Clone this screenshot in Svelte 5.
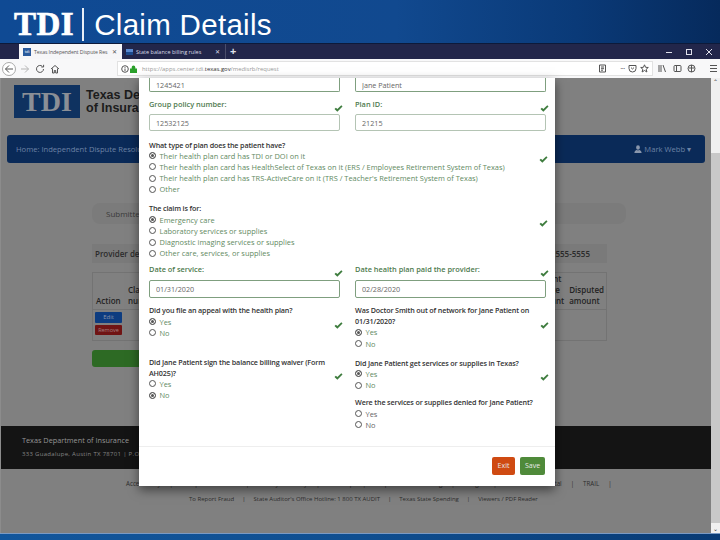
<script>
	const planTypes = [
		{ label: 'Their health plan card has TDI or DOI on it', checked: true },
		{ label: 'Their health plan card has HealthSelect of Texas on it (ERS / Employees Retirement System of Texas)' },
		{ label: "Their health plan card has TRS-ActiveCare on it (TRS / Teacher's Retirement System of Texas)" },
		{ label: 'Other' }
	];
	const claimTypes = [
		{ label: 'Emergency care', checked: true },
		{ label: 'Laboratory services or supplies' },
		{ label: 'Diagnostic imaging services or supplies' },
		{ label: 'Other care, services, or supplies' }
	];
	const footerOne = ['Accessibility', 'Complaints / Fraud', 'Privacy / Security', 'Site Map', 'Surprise Balance Billing', 'Budget', 'Texas Online Portal', 'TRAIL'];
	const footerTwo = ['To Report Fraud', "State Auditor's Office Hotline: 1 800 TX AUDIT", 'Texas State Spending', 'Viewers / PDF Reader'];
</script>

{#snippet check()}
	<svg class="check" viewBox="0 0 10 8" width="9" height="7"><path d="M0.4 4.6 L2 3 L3.7 4.6 L8.2 0.4 L9.6 1.6 L3.7 7.6 Z" /></svg>
{/snippet}

{#snippet radio(label, checked = false, green = true)}
	<div class="radio" class:green>
		<span class="dot" class:checked></span>
		<span>{label}</span>
	</div>
{/snippet}

<div class="slide">
	<header class="title">
		<span class="logo">TDI</span>
		<span class="sep"></span>
		<h1>Claim Details</h1>
	</header>

	<div class="tabbar">
		<div class="tab active">
			<span class="favicon">tdi</span>
			<span class="tabtext">Texas Independent Dispute Res</span>
			<span class="tabx">✕</span>
		</div>
		<div class="tab">
			<span class="favicon flat"></span>
			<span class="tabtext">State balance billing rules</span>
			<span class="tabx">✕</span>
		</div>
		<span class="plus">+</span>
		<div class="winbtns">
			<svg width="8" height="8" viewBox="0 0 8 8"><path d="M1 4.5H7" /></svg>
			<svg width="8" height="8" viewBox="0 0 8 8"><rect x="1.5" y="1.5" width="5" height="5" /></svg>
			<svg width="8" height="8" viewBox="0 0 8 8"><path d="M1 1L7 7M7 1L1 7" /></svg>
		</div>
	</div>

	<div class="toolbar">
		<span class="back">
			<svg width="10" height="10" viewBox="0 0 10 10"><path d="M9 5H1.5M5 1.5L1.5 5L5 8.5" /></svg>
		</span>
		<svg class="faint" width="10" height="10" viewBox="0 0 10 10"><path d="M1 5H8.5M5 1.5L8.5 5L5 8.5" /></svg>
		<svg width="10" height="10" viewBox="0 0 10 10"><path d="M8.5 5A3.5 3.5 0 1 1 7.3 2.3M8.6 0.8V3H6.4" /></svg>
		<svg width="10" height="10" viewBox="0 0 10 10"><path d="M1 5L5 1.5L9 5M2.5 4.5V9H4.3V6.5H5.7V9H7.5V4.5" /></svg>
		<div class="urlbar">
			<svg width="8" height="8" viewBox="0 0 8 8"><circle cx="4" cy="4" r="3.3" /><path d="M4 3.5V6M4 2V2.8" /></svg>
			<svg class="lock" width="7" height="8" viewBox="0 0 7 8"><path d="M1.7 3.5V2.2A1.8 1.8 0 0 1 5.3 2.2V3.5H7V8H0V3.5Z" /></svg>
			<span class="url">https://apps.center.tdi.<b>texas.gov</b>/medisrb/request</span>
			<span class="urlicons">
				<svg width="9" height="9" viewBox="0 0 9 9"><path d="M1.5 1H7.5V8H1.5ZM3 3H6M3 4.7H6M3 6.2H5" /></svg>
				<span class="more">•••</span>
				<svg width="9" height="9" viewBox="0 0 9 9"><path d="M1 1.5H8V4.5A3.5 3.5 0 0 1 1 4.5ZM3 3.6L4.5 5L6 3.6" /></svg>
				<svg width="9" height="9" viewBox="0 0 9 9"><path d="M4.5 0.8L5.6 3.3L8.3 3.5L6.2 5.2L6.9 8L4.5 6.5L2.1 8L2.8 5.2L0.7 3.5L3.4 3.3Z" /></svg>
			</span>
		</div>
		<svg width="9" height="9" viewBox="0 0 9 9"><path d="M1 1V8M3 1V8M5 1L7.5 8" /></svg>
		<svg class="sidebar" width="9" height="9" viewBox="0 0 9 9"><rect x="1" y="1.5" width="7" height="6" rx="1" /><path d="M3.5 1.5V7.5" /></svg>
		<svg width="9" height="9" viewBox="0 0 9 9"><circle cx="4.5" cy="4.5" r="3.5" /><path d="M1.5 4H7.5M4.5 1V8" /></svg>
		<svg class="menu" width="9" height="9" viewBox="0 0 9 9"><path d="M1 1.5H8M1 4.5H8M1 7.5H8" /></svg>
	</div>

	<div class="viewport">
		<div class="page">
			<div class="brand">
				<span class="brandlogo">TDI</span>
				<span class="brandname">Texas Department<br />of Insurance</span>
			</div>
			<nav class="topnav">
				<span>Home: Independent Dispute Resolution</span>
				<span class="user">
					<svg width="8" height="8" viewBox="0 0 8 8"><path d="M4 0.3A1.9 2.2 0 0 1 4 4.7A1.9 2.2 0 0 1 4 0.3ZM0.4 8C0.4 6 1.6 5.2 2.8 4.9L4 5.6L5.2 4.9C6.4 5.2 7.6 6 7.6 8Z" /></svg>
					Mark Webb ▾
				</span>
			</nav>
			<div class="steps"><span>Submitted</span></div>
			<div class="provider"><span>Provider details</span><span>555-5555</span></div>
			<div class="claims">
				<div class="chead">
					<span class="action">Action</span>
					<span class="cnum">Claim<br />number</span>
					<span class="amt"><span>Patient<br />charge<br />amount</span><span>Disputed<br />amount</span></span>
				</div>
				<div class="cbody">
					<span class="edit">Edit</span>
					<span class="remove">Remove</span>
				</div>
			</div>
			<div class="addbar"></div>
			<footer class="dark">
				<div class="dtitle">Texas Department of Insurance</div>
				<div class="daddr">333 Guadalupe, Austin TX 78701 | P.O. Box 149104</div>
			</footer>
			<div class="links">
				{#each footerOne as l}<span>{l}</span><i>|</i>{/each}
			</div>
			<div class="links second">
				{#each footerTwo as l, i}<span>{l}</span>{#if i < footerTwo.length - 1}<i>|</i>{/if}{/each}
			</div>
		</div>
		<div class="scrollbar">
			<span>⌃</span>
			<span class="thumb"></span>
			<span>⌄</span>
		</div>

		<div class="modal">
			<div class="modalbody">
				<div class="grid">
					<div class="field">
						<input class="input ok" value="1245421" readonly />
					</div>
					<div class="field">
						<input class="input ok" value="Jane Patient" readonly />
					</div>
					<div class="field">
						<div class="lab"><span>Group policy number:</span>{@render check()}</div>
						<input class="input" value="12532125" readonly />
					</div>
					<div class="field">
						<div class="lab"><span>Plan ID:</span>{@render check()}</div>
						<input class="input" value="21215" readonly />
					</div>
				</div>

				<div class="group plan">
					<div class="q">What type of plan does the patient have?</div>
					{#each planTypes as p}{@render radio(p.label, p.checked)}{/each}
					{@render check()}
				</div>
				<div class="group claim">
					<div class="q">The claim is for:</div>
					{#each claimTypes as p}{@render radio(p.label, p.checked)}{/each}
					{@render check()}
				</div>

				<div class="grid dates">
					<div class="field">
						<div class="lab"><span>Date of service:</span>{@render check()}</div>
						<input class="input ok" value="01/31/2020" readonly />
					</div>
					<div class="field">
						<div class="lab"><span>Date health plan paid the provider:</span>{@render check()}</div>
						<input class="input ok" value="02/28/2020" readonly />
					</div>
				</div>

				<div class="grid">
					<div>
						<div class="group">
							<div class="q">Did you file an appeal with the health plan?</div>
							{@render radio('Yes', true)}
							{@render radio('No')}
							{@render check()}
						</div>
						<div class="group waiver">
							<div class="q">Did Jane Patient sign the balance billing waiver (Form AH025)?</div>
							{@render radio('Yes')}
							{@render radio('No', true)}
							{@render check()}
						</div>
					</div>
					<div>
						<div class="group">
							<div class="q">Was Doctor Smith out of network for Jane Patient on 01/31/2020?</div>
							{@render radio('Yes', true)}
							{@render radio('No')}
							{@render check()}
						</div>
						<div class="group texas">
							<div class="q">Did Jane Patient get services or supplies in Texas?</div>
							{@render radio('Yes', true)}
							{@render radio('No')}
							{@render check()}
						</div>
						<div class="group denied">
							<div class="q">Were the services or supplies denied for Jane Patient?</div>
							{@render radio('Yes', false, false)}
							{@render radio('No', false, false)}
						</div>
					</div>
				</div>
			</div>
			<div class="modalfoot">
				<span class="btn exit">Exit</span>
				<span class="btn save">Save</span>
			</div>
		</div>
	</div>

	<div class="taskbar"></div>
</div>

<style>
	:global(body) {
		margin: 0;
	}

	.slide {
		width: 720px;
		height: 540px;
		overflow: hidden;
		display: flex;
		flex-direction: column;
		font-family: "Open Sans", sans-serif;
		background: #808080;
	}

	.title {
		height: 43px;
		flex: none;
		display: flex;
		align-items: center;
		padding: 6px 0 0 14px;
		box-sizing: border-box;
		background: linear-gradient(90deg, #0f4a94 0%, #11498f 55%, #0a3a78 80%, #062a5c 100%);
		color: #fff;
	}

	.logo {
		font-family: "Liberation Serif", serif;
		font-weight: bold;
		font-size: 33px;
		letter-spacing: 0.5px;
		line-height: 1;
		-webkit-text-stroke: 0.7px #fff;
	}

	.sep {
		width: 2px;
		height: 33px;
		margin: 0 10px 0 8px;
		background: #e8eef6;
	}

	h1 {
		margin: 0;
		font-family: "Liberation Sans", sans-serif;
		font-weight: normal;
		font-size: 29.5px;
		line-height: 1;
		letter-spacing: 0.3px;
	}

	.tabbar {
		height: 16px;
		flex: none;
		display: flex;
		align-items: stretch;
		padding-left: 19px;
		background: #22264a;
		color: #d8dae6;
		font-size: 5.5px;
		border-top: 1px solid #0d1a3a;
		box-sizing: border-box;
	}

	.tab {
		width: 104px;
		display: flex;
		align-items: center;
		gap: 3px;
		padding-left: 4px;
		box-sizing: border-box;
		white-space: nowrap;
		overflow: hidden;
		border-right: 1px solid #4a4d6a;
	}

	.tab.active {
		background: #f6f6f8;
		color: #555;
		width: 103px;
		border-right: 0;
		font-size: 5.2px;
		letter-spacing: -0.1px;
	}

	.favicon {
		width: 8px;
		height: 8px;
		background: #2a5a9c;
		color: #fff;
		font-size: 4px;
		line-height: 8px;
		text-align: center;
		flex: none;
	}

	.favicon.flat {
		width: 7px;
		height: 6px;
		background: linear-gradient(#5a8ad0 50%, #1c4a8c 50%);
	}

	.tabtext {
		flex: 1;
		min-width: 0;
	}

	.tabx {
		flex: none;
		width: 12px;
		margin-right: 2px;
		text-align: center;
		font-size: 6px;
	}

	.plus {
		margin-left: 4px;
		font-size: 11px;
		line-height: 14px;
		font-weight: bold;
		color: #dfe0ea;
	}

	.winbtns {
		margin-left: auto;
		display: flex;
		align-items: center;
		gap: 12px;
		padding-right: 7px;
	}

	.winbtns svg {
		fill: none;
		stroke: #dfe0ea;
		stroke-width: 1;
	}

	.toolbar {
		height: 19px;
		flex: none;
		display: flex;
		align-items: center;
		gap: 5px;
		padding-left: 2px;
		box-sizing: border-box;
		background: #f8f8f9;
	}

	.toolbar svg {
		fill: none;
		stroke: #555;
		stroke-width: 1;
		flex: none;
	}

	.toolbar svg.faint {
		stroke: #b5b5b5;
	}

	.toolbar svg.lock {
		fill: #2ba02b;
		stroke: none;
	}

	.toolbar svg.sidebar {
		margin-left: 1px;
	}

	.toolbar svg.menu {
		margin-left: 8px;
	}

	.back {
		width: 14px;
		height: 14px;
		box-sizing: border-box;
		border: 1px solid #aaa;
		border-radius: 50%;
		display: flex;
		align-items: center;
		justify-content: center;
		background: #fff;
		flex: none;
		margin-right: -1px;
	}

	.urlbar {
		width: 536px;
		flex: none;
		height: 15px;
		margin-left: 52px;
		display: flex;
		align-items: center;
		gap: 1px;
		padding: 0 3px;
		box-sizing: border-box;
		background: #fff;
		border: 1px solid #e2e2e2;
		font-size: 5.9px;
		color: #9a9a9a;
		white-space: nowrap;
	}

	.url {
		margin-left: 4px;
	}

	.url b {
		color: #333;
		font-weight: 400;
	}

	.urlicons {
		margin-left: auto;
		display: flex;
		align-items: center;
		gap: 3px;
	}

	.more {
		font-size: 4px;
		margin-left: 10px;
		color: #555;
	}

	.viewport {
		flex: 1;
		min-height: 0;
		display: flex;
		position: relative;
		background: #808080;
	}

	.page {
		flex: 1;
		min-width: 0;
		display: flex;
		flex-direction: column;
		color: #333;
		border-left: 1px solid #8c8c8c;
	}

	.brand {
		display: flex;
		align-items: center;
		gap: 6px;
		padding: 7px 0 0 13px;
		height: 40px;
		box-sizing: border-box;
		flex: none;
	}

	.brandlogo {
		width: 66px;
		height: 33px;
		background: #0f3260;
		color: #8b8f96;
		font-family: "Liberation Serif", serif;
		font-weight: bold;
		font-size: 28px;
		line-height: 33px;
		text-align: center;
		flex: none;
	}

	.brandname {
		font-family: "Liberation Sans", sans-serif;
		font-weight: bold;
		font-size: 12.5px;
		line-height: 13px;
		color: #1c1c1c;
	}

	.topnav {
		height: 28px;
		flex: none;
		margin: 17px 6px 0 6px;
		padding: 0 14px 0 9px;
		display: flex;
		align-items: center;
		justify-content: space-between;
		background: #0a2a58;
		border-radius: 3px;
		color: #6d83a5;
		font-size: 7.6px;
	}

	.user {
		display: flex;
		align-items: center;
		gap: 2px;
	}

	.user svg {
		fill: #8a97ad;
	}

	.steps {
		height: 21px;
		flex: none;
		margin: 40px 0 0 91px;
		width: 534px;
		padding-left: 14px;
		display: flex;
		align-items: center;
		box-sizing: border-box;
		background: #7b7b7b;
		border-radius: 8px;
		font-size: 8px;
		color: #3a3a3a;
	}

	.provider {
		height: 19px;
		flex: none;
		margin: 20px 0 0 91px;
		width: 515px;
		padding: 0 17px 0 3px;
		box-sizing: border-box;
		display: flex;
		align-items: center;
		justify-content: space-between;
		background: #7a7a7a;
		font-size: 8px;
		font-weight: 600;
		color: #2b2b2b;
	}

	.claims {
		margin: 9px 0 0 91px;
		width: 515px;
		height: 69px;
		box-sizing: border-box;
		border: 1px solid #737373;
		font-size: 8px;
		color: #232323;
		flex: none;
	}

	.chead {
		height: 37px;
		padding: 0 2px 3px 3px;
		box-sizing: border-box;
		display: flex;
		align-items: flex-end;
		border-bottom: 1px solid #737373;
		line-height: 11px;
	}

	.action {
		width: 29px;
		font-weight: 600;
	}

	.cnum {
		margin-left: 3px;
		font-weight: 600;
	}

	.amt {
		margin-left: auto;
		display: flex;
		align-items: flex-end;
		gap: 5px;
		font-weight: 600;
	}

	.cbody {
		display: flex;
		flex-direction: column;
		gap: 2px;
		padding: 2px 0 0 2px;
	}

	.edit, .remove {
		width: 27px;
		height: 11px;
		border-radius: 1px;
		font-size: 6px;
		line-height: 11px;
		text-align: center;
		color: #8894aa;
		background: #0d3c80;
	}

	.remove {
		height: 10px;
		line-height: 10px;
		background: #701414;
		color: #a58080;
		font-size: 5.5px;
	}

	.addbar {
		height: 17px;
		flex: none;
		width: 180px;
		margin: 9px 0 0 91px;
		background: #2d6a24;
		border-radius: 3px;
	}

	.dark {
		height: 43px;
		flex: none;
		box-sizing: border-box;
		margin-top: 59px;
		padding: 6px 0 0 21px;
		background: #141414;
		color: #858585;
		width: 710px;
	}

	.dtitle {
		font-size: 7.3px;
		line-height: 16px;
		color: #959595;
	}

	.daddr {
		font-size: 6px;
		line-height: 13px;
		letter-spacing: 0.3px;
	}

	.links {
		margin-top: 10px;
		padding-left: 125px;
		display: flex;
		gap: 9px;
		font-size: 6.2px;
		line-height: 9px;
		color: #2d2d2d;
		white-space: nowrap;
	}

	.links.second {
		margin-top: 7px;
		padding-left: 188px;
		gap: 8px;
		font-size: 6px;
	}

	.links i {
		font-style: normal;
	}

	.scrollbar {
		width: 9px;
		flex: none;
		box-sizing: border-box;
		display: flex;
		flex-direction: column;
		align-items: center;
		justify-content: space-between;
		background: #f0f0f0;
		font-size: 6px;
		color: #333;
		position: relative;
	}

	.scrollbar .thumb {
		position: absolute;
		left: 0;
		right: 0;
		top: 75px;
		height: 370px;
		background: #c8c8c8;
	}

	.modal {
		position: absolute;
		left: 139px;
		top: 0;
		width: 416px;
		height: 408px;
		background: #fff;
		box-shadow: 0 4px 10px rgba(0, 0, 0, 0.5);
		display: flex;
		flex-direction: column;
		color: #333;
		font-size: 7.45px;
	}

	.modalbody {
		flex: 1;
		min-height: 0;
		box-sizing: border-box;
		padding: 0 10px;
		border-bottom: 1px solid #eee;
	}

	.grid {
		display: grid;
		grid-template-columns: 191px 191px;
		column-gap: 15px;
	}

	.field {
		display: flex;
		flex-direction: column;
	}

	.lab {
		height: 22px;
		box-sizing: border-box;
		padding-top: 7px;
		position: relative;
		font-weight: 600;
		line-height: 11px;
		font-size: 7.4px;
		color: #4e7a4e;
	}

	.dates .lab {
		padding-top: 6px;
	}

	.check {
		fill: #3f7d3f;
		position: absolute;
		right: -3px;
		top: 16.5px;
	}

	.lab .check {
		top: 12.5px;
	}

	.input {
		all: unset;
		box-sizing: border-box;
		width: 191px;
		height: 17px;
		padding-left: 6px;
		border: 1px solid #b4c4b4;
		border-radius: 2px;
		font-size: 7.2px;
		color: #666;
		font-family: inherit;
	}

	.input.ok {
		border-color: #7f9f7f;
	}

	.field:nth-child(-n+2) .input.ok {
		height: 14px;
		border-top: 0;
		border-radius: 0 0 2px 2px;
	}

	.dates .field:nth-child(-n+2) .input.ok {
		height: 18px;
		border-top: 1px solid #7f9f7f;
		border-radius: 2px;
	}

	.dates {
		margin-top: -1px;
	}

	.group {
		position: relative;
		margin-top: 7.5px;
	}

	.group.plan {
		margin-top: 8.5px;
	}

	.group.claim {
		margin-top: 8.5px;
	}

	.group.texas {
		margin-top: 8.5px;
	}

	.group.denied {
		margin-top: 6.5px;
	}

	.group.waiver {
		margin-top: 18.5px;
	}

	.q {
		font-weight: 600;
		font-size: 7.2px;
		letter-spacing: -0.15px;
		line-height: 10.7px;
		color: #333;
	}

	.radio {
		display: flex;
		align-items: center;
		gap: 3.5px;
		height: 11.2px;
		color: #666;
		white-space: nowrap;
	}

	.radio.green {
		color: #5f8a5f;
	}

	.dot {
		width: 7px;
		height: 7px;
		box-sizing: border-box;
		border: 1px solid #555;
		border-radius: 50%;
		flex: none;
		background: #fff;
	}

	.dot.checked {
		background: #555;
		box-shadow: inset 0 0 0 1px #fff;
	}

	.modalfoot {
		height: 39px;
		flex: none;
		display: flex;
		align-items: flex-start;
		justify-content: flex-end;
		gap: 5px;
		padding: 10px 10px 0 0;
		box-sizing: border-box;
	}

	.btn {
		height: 18px;
		border-radius: 2px;
		font-size: 7px;
		line-height: 18px;
		text-align: center;
		color: #e9e9e9;
	}

	.exit {
		width: 23px;
		background: #cf4a12;
	}

	.save {
		width: 25px;
		background: #4f8a3a;
	}

	.taskbar {
		height: 7px;
		flex: none;
		border-top: 1px solid #7a9ac4;
		box-sizing: border-box;
		background: linear-gradient(90deg, #12569c, #0f4e90 50%, #083a74);
	}
</style>
